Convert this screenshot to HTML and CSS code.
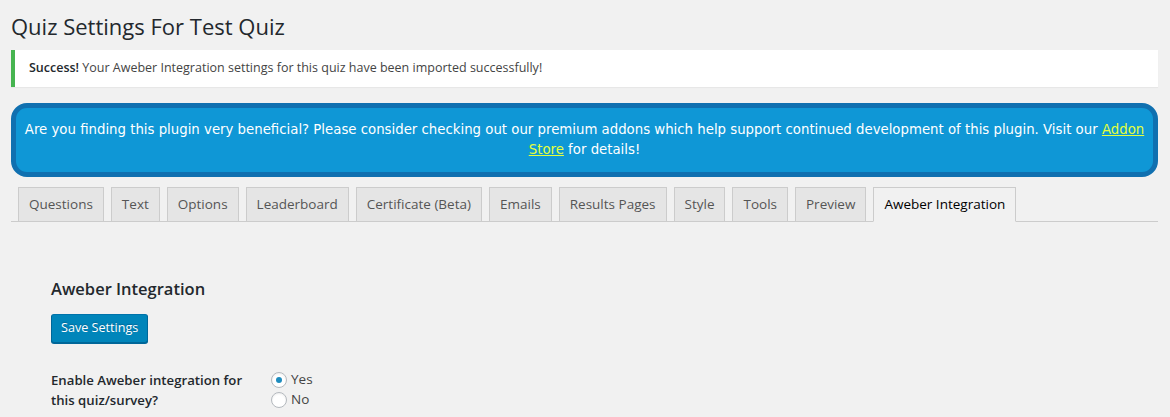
FILE: index.html
```html
<!DOCTYPE html>
<html lang="en">

<head>
  <meta charset="UTF-8">
  <title>Quiz Settings For Test Quiz</title>
  <link rel="stylesheet" href="styles.css">
</head>

<body>
  <div class="wrap">
    <h1 class="page-title">Quiz Settings For Test Quiz</h1>

    <div class="notice notice-success">
      <p><strong>Success!</strong> Your Aweber Integration settings for this quiz have been imported successfully!</p>
    </div>

    <div class="addon-banner">
      <p>Are you finding this plugin very beneficial? Please consider checking out our premium addons which help support
        continued development of this plugin. Visit our <a href="#">Addon Store</a> for details!</p>
    </div>

    <nav class="nav-tabs">
      <a class="nav-tab" href="#">Questions</a>
      <a class="nav-tab" href="#">Text</a>
      <a class="nav-tab" href="#">Options</a>
      <a class="nav-tab" href="#">Leaderboard</a>
      <a class="nav-tab" href="#">Certificate (Beta)</a>
      <a class="nav-tab" href="#">Emails</a>
      <a class="nav-tab" href="#">Results Pages</a>
      <a class="nav-tab" href="#">Style</a>
      <a class="nav-tab" href="#">Tools</a>
      <a class="nav-tab" href="#">Preview</a>
      <a class="nav-tab nav-tab-active" href="#">Aweber Integration</a>
    </nav>

    <div class="tab-panel">
      <h2>Aweber Integration</h2>
      <button class="button-primary" type="button">Save Settings</button>

      <div class="form-row">
        <div class="row-label">Enable Aweber integration for this quiz/survey?</div>
        <div class="radios">
          <label class="radio-opt"><span class="radio checked"></span>Yes</label>
          <label class="radio-opt"><span class="radio"></span>No</label>
        </div>
      </div>
    </div>
  </div>
</body>

</html>
```

FILE: styles.css
```css
body {
  margin: 0;
  background: #f1f1f1;
  color: #23282d;
  font: 13px/1.4 "Open Sans", sans-serif;
  overflow: hidden;
}

.wrap {
  padding: 0 12px 0 11px;
}

.page-title {
  margin: 0;
  padding: 12px 0 9px;
  font-size: 22px;
  font-weight: 400;
  line-height: 29px;
  color: #23282d;
}

.notice {
  background: #fff;
  border-left: 4px solid #46b450;
  box-shadow: 0 1px 1px rgba(0, 0, 0, .04);
  padding: 1px 12px;
}

.notice p {
  margin: 6px 0;
  padding: 2px;
  line-height: 1.5;
  font-size: 12.5px;
  color: #444;
}

.notice strong {
  font-weight: 600;
  color: #23282d;
}

.addon-banner {
  margin: 16px 0 10px;
  background: #0f97d6;
  border: 5px solid #1070b0;
  border-radius: 16px;
  padding: 12px 1px;
  text-align: center;
}

.addon-banner p {
  margin: 0;
  font: 13.3px/20px "DejaVu Sans", Verdana, sans-serif;
  color: #fff;
}

.addon-banner a {
  color: #e4ff3c;
}

.nav-tabs {
  display: flex;
  border-bottom: 1px solid #ccc;
}

.nav-tab {
  margin-left: 7px;
  margin-bottom: -1px;
  padding: 5px 10px;
  border: 1px solid #ccc;
  background: #e5e5e5;
  color: #555;
  font-size: 13.5px;
  line-height: 23px;
  text-decoration: none;
  white-space: nowrap;
}

.nav-tab-active {
  background: #f1f1f1;
  border-bottom-color: #f1f1f1;
  color: #000;
}

.tab-panel {
  padding: 55px 40px 0;
}

.tab-panel h2 {
  margin: 0 0 13px;
  font-size: 16.5px;
  font-weight: 600;
  line-height: 24px;
}

.button-primary {
  height: 29px;
  padding: 0 9px 2px;
  background: #0085ba;
  border: 1px solid;
  border-color: #0073aa #006799 #006799;
  border-radius: 3px;
  box-shadow: 0 1px 0 #006799;
  color: #fff;
  font: 12.6px/26px "Open Sans", sans-serif;
  text-shadow: 0 -1px 1px #006799;
}

.form-row {
  display: flex;
  margin-top: 27px;
}

.row-label {
  width: 200px;
  padding-right: 20px;
  font-size: 13.2px;
  font-weight: 600;
  line-height: 20px;
  color: #23282d;
}

.radios {
  display: flex;
  flex-direction: column;
}

.radio-opt {
  display: flex;
  align-items: center;
  gap: 4px;
  height: 20px;
  font-size: 13.5px;
  color: #444;
}

.radio {
  width: 14px;
  height: 14px;
  border: 1px solid #b4b9be;
  border-radius: 50%;
  background: #fff;
  box-shadow: inset 0 1px 2px rgba(0, 0, 0, .07);
  display: flex;
  align-items: center;
  justify-content: center;
}

.radio.checked::before {
  content: "";
  width: 6px;
  height: 6px;
  border-radius: 50%;
  background: #1e8cbe;
}
```
